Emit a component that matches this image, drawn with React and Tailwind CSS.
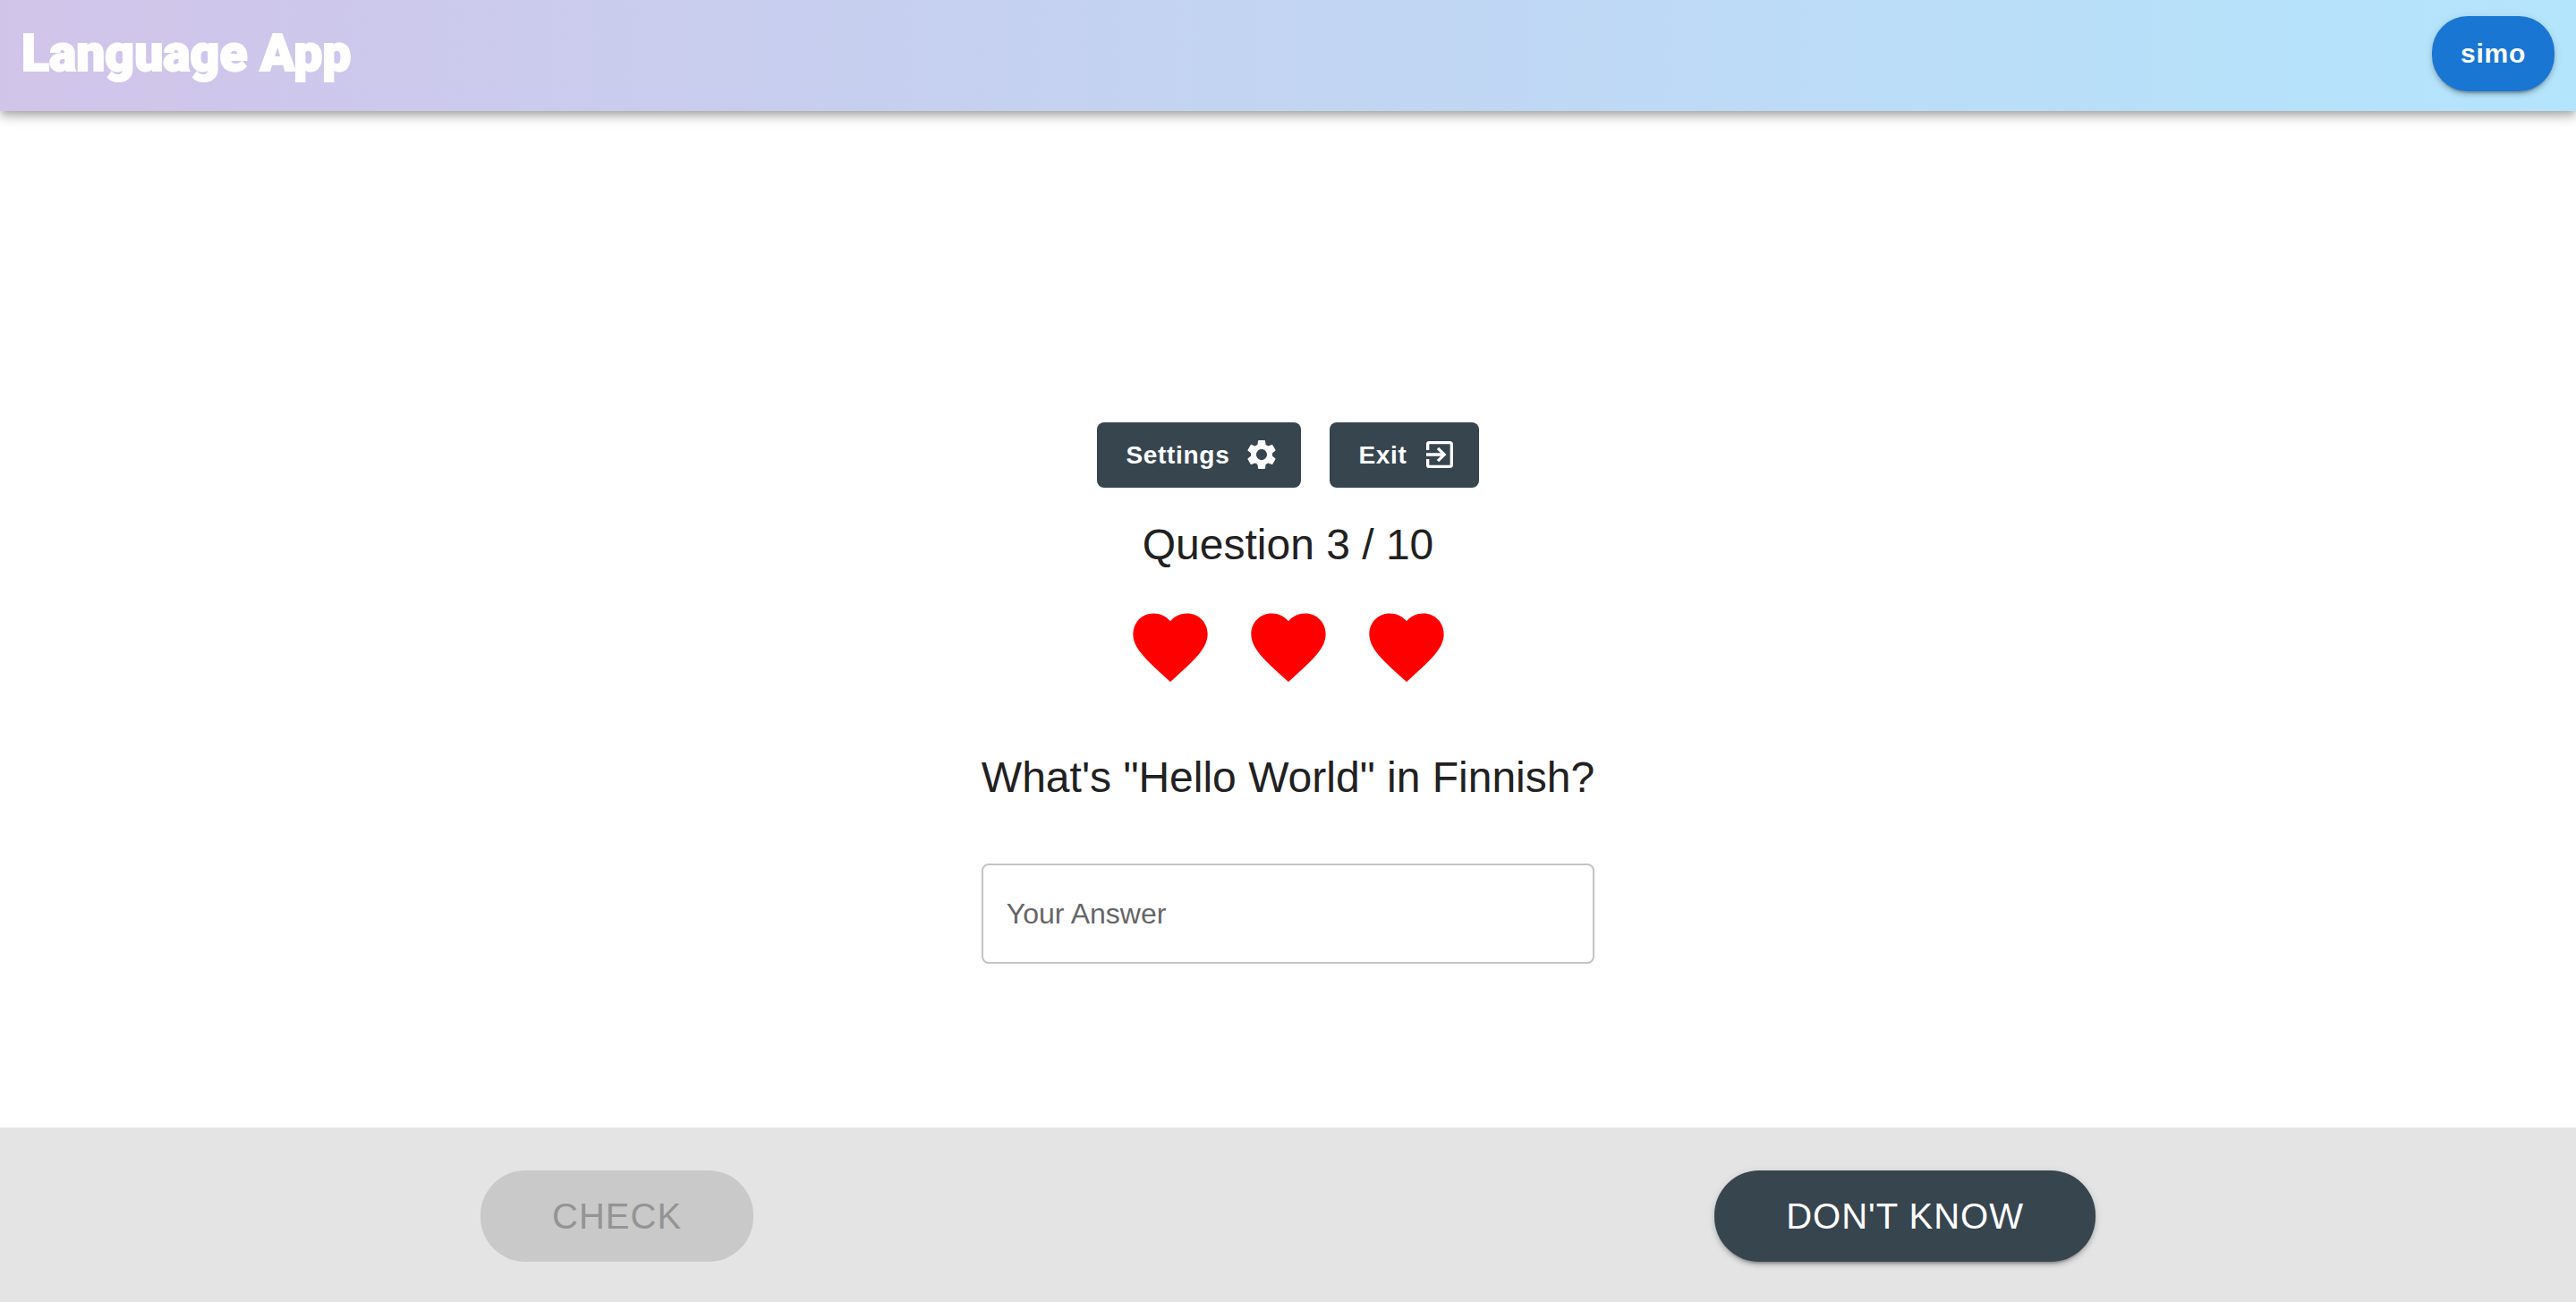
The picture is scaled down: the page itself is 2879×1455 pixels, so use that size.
import { useState } from "react";
import { MdSettings, MdExitToApp, MdFavorite } from "react-icons/md";

const SMALL_BUTTON =
  "flex items-center gap-4 rounded-lg bg-[#37454f] py-3 pl-8 pr-6 text-[28px] leading-[49px] font-bold tracking-wide text-white";
const PILL_BUTTON =
  "rounded-[50px] px-20 py-4 text-[40px] leading-[70px] tracking-wide uppercase";

function Header() {
  return (
    <header className="z-10 flex items-center justify-between bg-linear-[90deg] from-[#d1c4e9] to-[#b3e5fc] px-6 pt-[18px] pb-[22px] shadow-[0_4px_8px_-2px_rgba(0,0,0,0.2),0_8px_10px_0_rgba(0,0,0,0.14),0_2px_20px_0_rgba(0,0,0,0.12)]">
      <a
        href="#"
        className="font-['Impact','Roboto',sans-serif] text-[57px] leading-[84px] font-black text-white [-webkit-text-stroke:2px_white]"
      >
        Language App
      </a>
      <button
        type="button"
        className="rounded-[40px] bg-[#1976d2] px-8 py-4 text-[30px] leading-[52px] font-bold tracking-wide text-white shadow-[0_6px_2px_-4px_rgba(0,0,0,0.2),0_4px_4px_0_rgba(0,0,0,0.14),0_2px_10px_0_rgba(0,0,0,0.12)]"
      >
        simo
      </button>
    </header>
  );
}

function Quiz({ answer, onAnswer }) {
  return (
    <main className="flex flex-1 flex-col items-center justify-center pt-[164px]">
      <div className="flex gap-8">
        <button type="button" className={SMALL_BUTTON}>
          Settings
          <MdSettings className="size-10" aria-hidden="true" />
        </button>
        <button type="button" className={SMALL_BUTTON}>
          Exit
          <MdExitToApp className="size-10" aria-hidden="true" />
        </button>
      </div>
      <h2 className="mt-8 text-5xl leading-[64px]">Question 3 / 10</h2>
      <div className="mt-8 flex gap-8 text-[#ff0000]" role="img" aria-label="3 lives left">
        {[1, 2, 3].map((life) => (
          <MdFavorite key={life} className="size-[100px]" />
        ))}
      </div>
      <div className="mt-16 flex flex-col gap-16">
        <h1 className="text-5xl leading-[64px]">What's "Hello World" in Finnish?</h1>
        <div className="relative flex">
          <input
            id="answer"
            type="text"
            value={answer}
            onChange={(event) => onAnswer(event.target.value)}
            placeholder=" "
            className="peer h-28 w-full min-w-0 rounded-lg border-2 border-[#c4c4c4] px-[26px] text-[32px]"
          />
          <label
            htmlFor="answer"
            className="pointer-events-none absolute inset-y-0 left-7 flex items-center text-[32px] text-[#666666] peer-[:not(:placeholder-shown)]:hidden"
          >
            Your Answer
          </label>
        </div>
      </div>
    </main>
  );
}

function Actions({ canCheck }) {
  return (
    <footer className="flex justify-around bg-[#e4e4e4] pt-12 pb-[45px]">
      <button
        type="button"
        disabled={!canCheck}
        className={`${PILL_BUTTON} bg-[#37454f] text-white disabled:bg-[#c9c9c9] disabled:text-[#949494]`}
      >
        Check
      </button>
      <button
        type="button"
        className={`${PILL_BUTTON} bg-[#37454f] text-white shadow-[0_6px_2px_-4px_rgba(0,0,0,0.2),0_4px_4px_0_rgba(0,0,0,0.14),0_2px_10px_0_rgba(0,0,0,0.12)]`}
      >
        Don't know
      </button>
    </footer>
  );
}

export default function App() {
  const [answer, setAnswer] = useState("");
  return (
    <div className="flex min-h-screen flex-col bg-white font-['Liberation_Sans',Arial,sans-serif] text-[#212121]">
      <Header />
      <Quiz answer={answer} onAnswer={setAnswer} />
      <Actions canCheck={answer.trim().length > 0} />
    </div>
  );
}
